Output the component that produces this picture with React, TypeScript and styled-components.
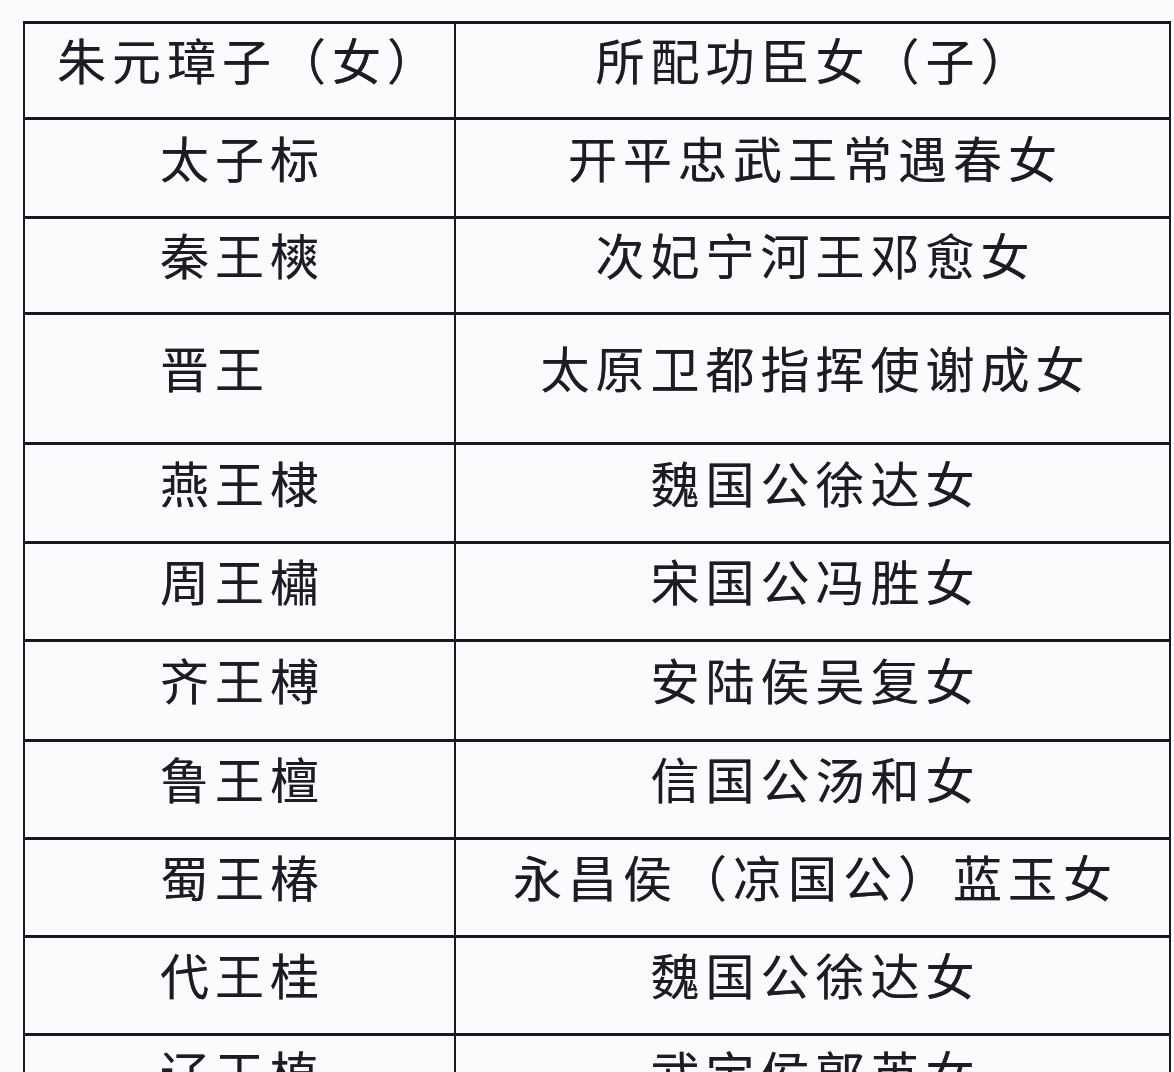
import { Fragment } from 'react';
import styled, { createGlobalStyle } from 'styled-components';

const GlobalStyle = createGlobalStyle`
  html, body {
    margin: 0;
    padding: 0;
    background: #fbfbfd;
    overflow: hidden;
  }
`;

const Page = styled.div`
  height: 1072px;
  padding: 21px 0 0 23px;
  box-sizing: border-box;
  overflow: hidden;
`;

const Table = styled.div`
  display: grid;
  grid-template-columns: 431px 715px;
  width: 1146px;
  border-top: 3px solid #1a1820;
  border-left: 2px solid #1a1820;
`;

const Cell = styled.div<{ $h: number; $left?: boolean; $pad?: number }>`
  box-sizing: border-box;
  height: ${(p) => p.$h}px;
  display: flex;
  align-items: center;
  justify-content: ${(p) => (p.$left ? 'flex-start' : 'center')};
  padding: 0 0 24px ${(p) => (p.$left ? 135 : p.$pad ?? 6)}px;
  border-right: 2px solid #1a1820;
  border-bottom: 3px solid #1a1820;
  font-family: 'Noto Sans CJK SC', 'Noto Sans', sans-serif;
  font-size: 49px;
  line-height: 1;
  letter-spacing: 6px;
  color: #1d1b24;
  white-space: nowrap;
  text-shadow: 0 0 0.6px rgba(20, 18, 30, 0.6);
`;

const rows: [string, string, number][] = [
  ['太子标', '开平忠武王常遇春女', 99],
  ['秦王樉', '次妃宁河王邓愈女', 96],
  ['晋王', '太原卫都指挥使谢成女', 130],
  ['燕王棣', '魏国公徐达女', 99],
  ['周王橚', '宋国公冯胜女', 98],
  ['齐王榑', '安陆侯吴复女', 100],
  ['鲁王檀', '信国公汤和女', 98],
  ['蜀王椿', '永昌侯（凉国公）蓝玉女', 98],
  ['代王桂', '魏国公徐达女', 98],
  ['辽王植', '武定侯郭英女', 98],
];

function App() {
  return (
    <Page>
      <GlobalStyle />
      <Table>
        <Cell $h={96} $pad={20}>
          朱元璋子（女）
        </Cell>
        <Cell $h={96}>所配功臣女（子）</Cell>
        {rows.map(([son, wife, h], index) => (
          <Fragment key={index}>
            <Cell $h={h} $left>
              {son}
            </Cell>
            <Cell $h={h}>{wife}</Cell>
          </Fragment>
        ))}
      </Table>
    </Page>
  );
}

export default App;
